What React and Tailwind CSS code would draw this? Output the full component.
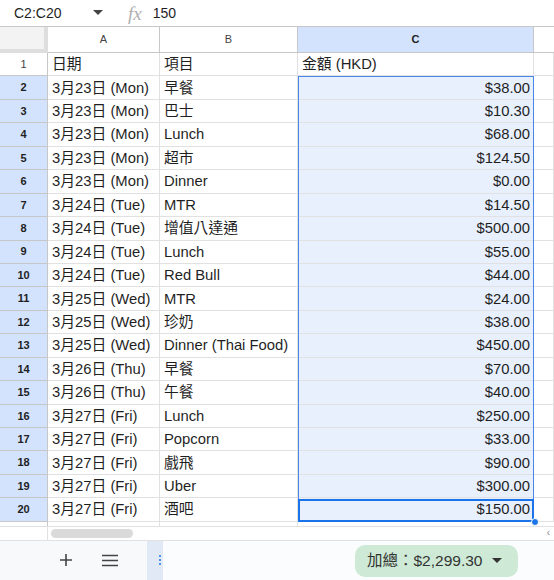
import React from 'react';

const rows = [
  ['日期', '項目', '金額 (HKD)'],
  ['3月23日 (Mon)', '早餐', '$38.00'],
  ['3月23日 (Mon)', '巴士', '$10.30'],
  ['3月23日 (Mon)', 'Lunch', '$68.00'],
  ['3月23日 (Mon)', '超市', '$124.50'],
  ['3月23日 (Mon)', 'Dinner', '$0.00'],
  ['3月24日 (Tue)', 'MTR', '$14.50'],
  ['3月24日 (Tue)', '增值八達通', '$500.00'],
  ['3月24日 (Tue)', 'Lunch', '$55.00'],
  ['3月24日 (Tue)', 'Red Bull', '$44.00'],
  ['3月25日 (Wed)', 'MTR', '$24.00'],
  ['3月25日 (Wed)', '珍奶', '$38.00'],
  ['3月25日 (Wed)', 'Dinner (Thai Food)', '$450.00'],
  ['3月26日 (Thu)', '早餐', '$70.00'],
  ['3月26日 (Thu)', '午餐', '$40.00'],
  ['3月27日 (Fri)', 'Lunch', '$250.00'],
  ['3月27日 (Fri)', 'Popcorn', '$33.00'],
  ['3月27日 (Fri)', '戲飛', '$90.00'],
  ['3月27日 (Fri)', 'Uber', '$300.00'],
  ['3月27日 (Fri)', '酒吧', '$150.00'],
];

const font = { fontFamily: '"Liberation Sans", "Noto Sans CJK TC", Arial, sans-serif' };
const cell = 'h-full flex items-center border-r border-b border-[#e1e1e1] px-[4px] whitespace-nowrap overflow-hidden';

function Row({ n, data }) {
  const selected = n > 1;
  return (
    <div className="flex h-[23.45px] text-[14.8px] text-[#1f1f1f]">
      <div
        className={
          'w-[48px] shrink-0 h-full flex items-center justify-center border-r border-b border-[#c7c7c7] text-[11px] ' +
          (selected ? 'bg-[#d3e3fd] font-bold text-[#1f1f1f]' : 'bg-white text-[#444]')
        }
      >
        {n}
      </div>
      <div className={cell + ' w-[112px] shrink-0'}>{data[0]}</div>
      <div className={cell + ' w-[138px] shrink-0'}>{data[1]}</div>
      <div
        className={
          cell + ' w-[236px] shrink-0 ' + (selected ? 'justify-end bg-[#e8f0fe] pr-[3px]' : '')
        }
      >
        {data[2]}
      </div>
      <div className={cell + ' flex-1'} />
    </div>
  );
}

export default function App() {
  return (
    <div className="w-[554px] h-[580px] bg-white overflow-hidden flex flex-col" style={font}>
      {/* name box + formula bar */}
      <div className="h-[27px] shrink-0 flex items-center text-[14px] text-[#1f1f1f] border-b border-[#c7c7c7]">
        <span className="ml-[14px] w-[79px]">C2:C20</span>
        <svg width="10" height="6" viewBox="0 0 10 6">
          <path d="M0 0h10L5 5z" fill="#444" />
        </svg>
        <span
          className="ml-[25px] text-[19px] italic text-[#b0b0b0] leading-none"
          style={{ fontFamily: '"Liberation Serif", serif' }}
        >
          fx
        </span>
        <span className="ml-[11px]">150</span>
      </div>

      {/* column headers */}
      <div className="h-[26px] shrink-0 flex text-[11px] text-[#444]">
        <div className="w-[48px] shrink-0 h-full bg-[#f3f3f3] border-r-[4px] border-b-[4px] border-[#dedede]" />
        <div className="w-[112px] shrink-0 h-full flex items-center justify-center border-r border-b border-[#c7c7c7]">A</div>
        <div className="w-[138px] shrink-0 h-full flex items-center justify-center border-r border-b border-[#c7c7c7]">B</div>
        <div className="w-[236px] shrink-0 h-full flex items-center justify-center border-r border-b border-[#c7c7c7] bg-[#d3e3fd] font-bold text-[#1f1f1f]">C</div>
        <div className="flex-1 h-full border-b border-[#c7c7c7]" />
      </div>

      {/* grid body */}
      <div className="relative shrink-0">
        {rows.map((r, i) => (
          <Row key={i} n={i + 1} data={r} />
        ))}
        {/* selection range outline */}
        <div className="absolute left-[298px] top-[23.45px] w-[236px] h-[445.55px] border border-[#4a86e8] pointer-events-none" />
        {/* active cell */}
        <div className="absolute left-[298px] top-[445.55px] w-[236px] h-[23.45px] border-2 border-[#1a73e8] pointer-events-none" />
        {/* fill handle */}
        <div className="absolute left-[531px] top-[465px] w-[8px] h-[8px] rounded-full bg-[#1a73e8] border border-white" />
      </div>

      {/* sliver of next row */}
      <div className="h-[4px] shrink-0 flex">
        <div className="w-[48px] shrink-0 border-r border-[#c7c7c7]" />
        <div className="w-[112px] shrink-0 border-r border-[#e1e1e1]" />
        <div className="w-[138px] shrink-0 border-r border-[#e1e1e1]" />
        <div className="w-[236px] shrink-0 border-r border-[#e1e1e1]" />
      </div>

      {/* horizontal scrollbar */}
      <div className="h-[14px] shrink-0 flex items-center border-t border-[#e1e1e1]">
        <div className="w-[48px] shrink-0 h-full border-r border-[#e1e1e1]" />
        <div className="ml-[3px] w-[82px] h-[9px] rounded-full bg-[#dadada]" />
        <div className="ml-auto mr-[4px] text-[10px] text-[#888] leading-none">‹</div>
      </div>

      {/* sheet bar */}
      <div className="flex-1 flex items-center bg-[#f8f9fa] border-t border-[#e1e1e1]">
        <svg width="14" height="14" viewBox="0 0 14 14" className="ml-[59px]">
          <path d="M7 1v12M1 7h12" stroke="#444" strokeWidth="1.6" />
        </svg>
        <svg width="16" height="13" viewBox="0 0 16 13" className="ml-[29px]">
          <path d="M0 1.5h16M0 6.5h16M0 11.5h16" stroke="#444" strokeWidth="1.6" />
        </svg>
        <div className="ml-[29px] w-[16px] h-full bg-[#e1e9f7] flex items-center justify-end pr-[1px]">
          <svg width="4" height="12" viewBox="0 0 4 12">
            <circle cx="2" cy="2" r="1" fill="#1a73e8" />
            <circle cx="2" cy="6" r="1" fill="#1a73e8" />
            <circle cx="2" cy="10" r="1" fill="#1a73e8" />
          </svg>
        </div>
        <div className="flex-1 h-full bg-[#fbfcfd]" />
        <div className="absolute left-[355px] top-[545px] w-[163px] h-[32px] pl-[12px] flex items-center rounded-[10px] bg-[#ceead6] text-[15.5px] text-[#333]">
          <span>加總：$2,299.30</span>
          <svg width="10" height="6" viewBox="0 0 10 6" className="ml-auto mr-[16px]">
            <path d="M0 0h10L5 5z" fill="#333" />
          </svg>
        </div>
      </div>
    </div>
  );
}
